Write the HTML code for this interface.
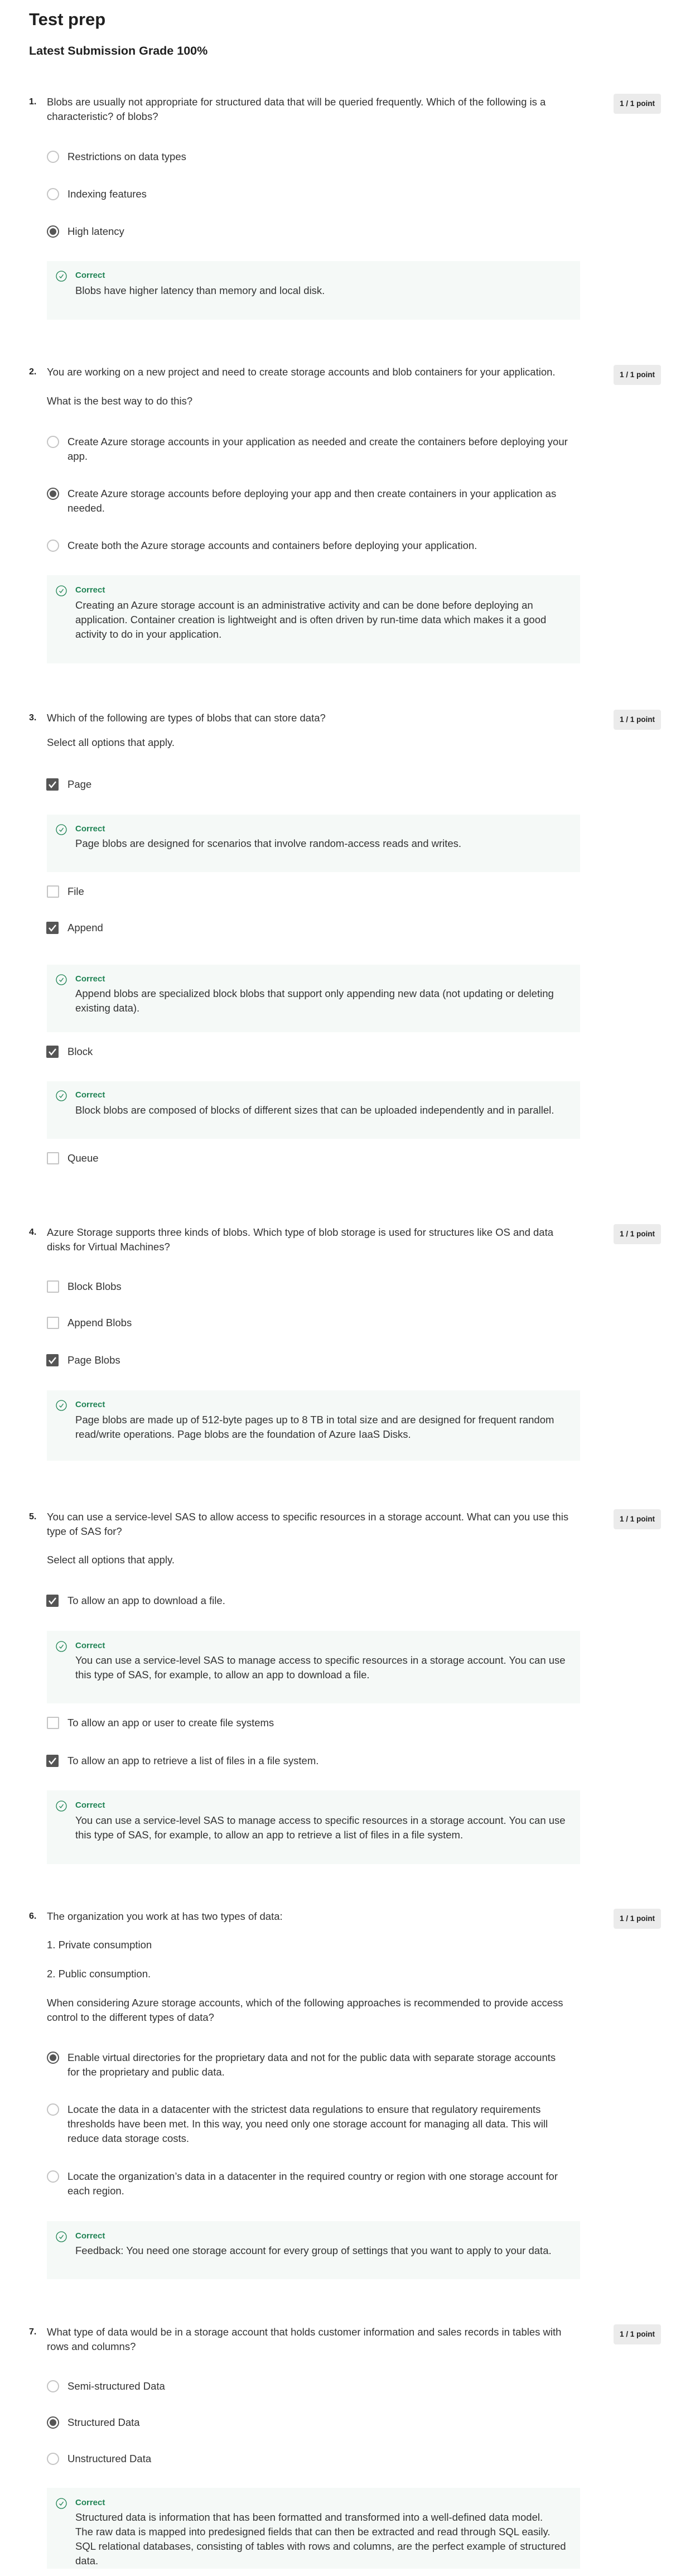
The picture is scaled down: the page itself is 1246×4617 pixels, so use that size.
<!DOCTYPE html>
<html><head><meta charset="utf-8"><style>
body{margin:0;width:1246px;height:4617px;background:#fff;position:relative;font-family:"Liberation Sans",sans-serif;color:#1f1f1f;overflow:hidden}
.a{position:absolute;white-space:nowrap}
.t{position:absolute;white-space:nowrap;font-size:18.5px;line-height:26px;color:#333}
.n{position:absolute;left:52px;font-size:16px;line-height:26px;font-weight:bold;color:#1f1f1f}
.b{position:absolute;left:1100px;width:85px;height:36px;background:#ebebeb;border-radius:4px;font-size:13.5px;font-weight:bold;line-height:36px;text-align:center;color:#1f1f1f}
.r{position:absolute;left:84px;width:18px;height:18px;border:2px solid #c4c4c4;border-radius:50%}
.r.s{border-color:#555}
.r.s:after{content:"";position:absolute;left:3px;top:3px;width:12px;height:12px;border-radius:50%;background:#555}
.c{position:absolute;left:84px;width:18px;height:18px;border:2px solid #c4c4c4;border-radius:2px}
.fb{position:absolute;left:84px;width:956px;background:#f5f9f7}
.ic{position:absolute;left:100px}
.cr{position:absolute;left:135px;font-size:15px;font-weight:bold;color:#1f8354;line-height:26px}
</style></head><body>
<div class="a" style="left:52px;top:17px;font-size:31px;font-weight:bold;color:#1f1f1f">Test prep</div>
<div class="a" style="left:52px;top:79px;font-size:21.5px;font-weight:bold;color:#1f1f1f">Latest Submission Grade 100%</div>

<!-- Q1 -->
<div class="n" style="top:170px">1.</div><div class="b" style="top:168px">1 / 1 point</div>
<div class="t" style="left:84px;top:170px">Blobs are usually not appropriate for structured data that will be queried frequently. Which of the following is a<br>characteristic? of blobs?</div>
<div class="r" style="top:270px"></div><div class="t" style="left:121px;top:268px">Restrictions on data types</div>
<div class="r" style="top:337px"></div><div class="t" style="left:121px;top:335px">Indexing features</div>
<div class="r s" style="top:404px"></div><div class="t" style="left:121px;top:402px">High latency</div>
<div class="fb" style="top:468px;height:105px"></div>
<svg class="ic" style="top:485px" width="20" height="20" viewBox="0 0 20 20"><circle cx="10" cy="10" r="9" fill="none" stroke="#1f8354" stroke-width="1.3"/><path d="M6.5 10.5l2.5 2.5 4.5-6" fill="none" stroke="#1f8354" stroke-width="1.3"/></svg>
<div class="cr" style="top:481px">Correct</div>
<div class="t" style="left:135px;top:508px">Blobs have higher latency than memory and local disk.</div>

<!-- Q2 -->
<div class="n" style="top:654px">2.</div><div class="b" style="top:654px">1 / 1 point</div>
<div class="t" style="left:84px;top:654px">You are working on a new project and need to create storage accounts and blob containers for your application.</div>
<div class="t" style="left:84px;top:706px">What is the best way to do this?</div>
<div class="r" style="top:781px"></div><div class="t" style="left:121px;top:779px">Create Azure storage accounts in your application as needed and create the containers before deploying your<br>app.</div>
<div class="r s" style="top:874px"></div><div class="t" style="left:121px;top:872px">Create Azure storage accounts before deploying your app and then create containers in your application as<br>needed.</div>
<div class="r" style="top:967px"></div><div class="t" style="left:121px;top:965px">Create both the Azure storage accounts and containers before deploying your application.</div>
<div class="fb" style="top:1031px;height:158px"></div>
<svg class="ic" style="top:1049px" width="20" height="20" viewBox="0 0 20 20"><circle cx="10" cy="10" r="9" fill="none" stroke="#1f8354" stroke-width="1.3"/><path d="M6.5 10.5l2.5 2.5 4.5-6" fill="none" stroke="#1f8354" stroke-width="1.3"/></svg>
<div class="cr" style="top:1045px">Correct</div>
<div class="t" style="left:135px;top:1072px">Creating an Azure storage account is an administrative activity and can be done before deploying an<br>application. Container creation is lightweight and is often driven by run-time data which makes it a good<br>activity to do in your application.</div>

<!-- Q3 -->
<div class="n" style="top:1274px">3.</div><div class="b" style="top:1272px">1 / 1 point</div>
<div class="t" style="left:84px;top:1274px">Which of the following are types of blobs that can store data?</div>
<div class="t" style="left:84px;top:1318px">Select all options that apply.</div>
<svg class="a" style="left:83px;top:1395px" width="22" height="22"><rect width="22" height="22" rx="2" fill="#555"/><path d="M5 11l4 5 8-10" fill="none" stroke="#fff" stroke-width="2.4"/></svg>
<div class="t" style="left:121px;top:1393px">Page</div>
<div class="fb" style="top:1460px;height:103px"></div>
<svg class="ic" style="top:1477px" width="20" height="20" viewBox="0 0 20 20"><circle cx="10" cy="10" r="9" fill="none" stroke="#1f8354" stroke-width="1.3"/><path d="M6.5 10.5l2.5 2.5 4.5-6" fill="none" stroke="#1f8354" stroke-width="1.3"/></svg>
<div class="cr" style="top:1473px">Correct</div>
<div class="t" style="left:135px;top:1499px">Page blobs are designed for scenarios that involve random-access reads and writes.</div>
<div class="c" style="top:1587px"></div><div class="t" style="left:121px;top:1585px">File</div>
<svg class="a" style="left:83px;top:1652px" width="22" height="22"><rect width="22" height="22" rx="2" fill="#555"/><path d="M5 11l4 5 8-10" fill="none" stroke="#fff" stroke-width="2.4"/></svg>
<div class="t" style="left:121px;top:1650px">Append</div>
<div class="fb" style="top:1729px;height:121px"></div>
<svg class="ic" style="top:1746px" width="20" height="20" viewBox="0 0 20 20"><circle cx="10" cy="10" r="9" fill="none" stroke="#1f8354" stroke-width="1.3"/><path d="M6.5 10.5l2.5 2.5 4.5-6" fill="none" stroke="#1f8354" stroke-width="1.3"/></svg>
<div class="cr" style="top:1742px">Correct</div>
<div class="t" style="left:135px;top:1768px">Append blobs are specialized block blobs that support only appending new data (not updating or deleting<br>existing data).</div>
<svg class="a" style="left:83px;top:1874px" width="22" height="22"><rect width="22" height="22" rx="2" fill="#555"/><path d="M5 11l4 5 8-10" fill="none" stroke="#fff" stroke-width="2.4"/></svg>
<div class="t" style="left:121px;top:1872px">Block</div>
<div class="fb" style="top:1938px;height:103px"></div>
<svg class="ic" style="top:1954px" width="20" height="20" viewBox="0 0 20 20"><circle cx="10" cy="10" r="9" fill="none" stroke="#1f8354" stroke-width="1.3"/><path d="M6.5 10.5l2.5 2.5 4.5-6" fill="none" stroke="#1f8354" stroke-width="1.3"/></svg>
<div class="cr" style="top:1950px">Correct</div>
<div class="t" style="left:135px;top:1977px">Block blobs are composed of blocks of different sizes that can be uploaded independently and in parallel.</div>
<div class="c" style="top:2065px"></div><div class="t" style="left:121px;top:2063px">Queue</div>

<!-- Q4 -->
<div class="n" style="top:2196px">4.</div><div class="b" style="top:2194px">1 / 1 point</div>
<div class="t" style="left:84px;top:2196px">Azure Storage supports three kinds of blobs. Which type of blob storage is used for structures like OS and data<br>disks for Virtual Machines?</div>
<div class="c" style="top:2295px"></div><div class="t" style="left:121px;top:2293px">Block Blobs</div>
<div class="c" style="top:2360px"></div><div class="t" style="left:121px;top:2358px">Append Blobs</div>
<svg class="a" style="left:83px;top:2427px" width="22" height="22"><rect width="22" height="22" rx="2" fill="#555"/><path d="M5 11l4 5 8-10" fill="none" stroke="#fff" stroke-width="2.4"/></svg>
<div class="t" style="left:121px;top:2425px">Page Blobs</div>
<div class="fb" style="top:2492px;height:126px"></div>
<svg class="ic" style="top:2509px" width="20" height="20" viewBox="0 0 20 20"><circle cx="10" cy="10" r="9" fill="none" stroke="#1f8354" stroke-width="1.3"/><path d="M6.5 10.5l2.5 2.5 4.5-6" fill="none" stroke="#1f8354" stroke-width="1.3"/></svg>
<div class="cr" style="top:2505px">Correct</div>
<div class="t" style="left:135px;top:2532px">Page blobs are made up of 512-byte pages up to 8 TB in total size and are designed for frequent random<br>read/write operations. Page blobs are the foundation of Azure IaaS Disks.</div>

<!-- Q5 -->
<div class="n" style="top:2706px">5.</div><div class="b" style="top:2705px">1 / 1 point</div>
<div class="t" style="left:84px;top:2706px">You can use a service-level SAS to allow access to specific resources in a storage account. What can you use this<br>type of SAS for?</div>
<div class="t" style="left:84px;top:2783px">Select all options that apply.</div>
<svg class="a" style="left:83px;top:2858px" width="22" height="22"><rect width="22" height="22" rx="2" fill="#555"/><path d="M5 11l4 5 8-10" fill="none" stroke="#fff" stroke-width="2.4"/></svg>
<div class="t" style="left:121px;top:2856px">To allow an app to download a file.</div>
<div class="fb" style="top:2923px;height:130px"></div>
<svg class="ic" style="top:2941px" width="20" height="20" viewBox="0 0 20 20"><circle cx="10" cy="10" r="9" fill="none" stroke="#1f8354" stroke-width="1.3"/><path d="M6.5 10.5l2.5 2.5 4.5-6" fill="none" stroke="#1f8354" stroke-width="1.3"/></svg>
<div class="cr" style="top:2937px">Correct</div>
<div class="t" style="left:135px;top:2963px">You can use a service-level SAS to manage access to specific resources in a storage account. You can use<br>this type of SAS, for example, to allow an app to download a file.</div>
<div class="c" style="top:3077px"></div><div class="t" style="left:121px;top:3075px">To allow an app or user to create file systems</div>
<svg class="a" style="left:83px;top:3145px" width="22" height="22"><rect width="22" height="22" rx="2" fill="#555"/><path d="M5 11l4 5 8-10" fill="none" stroke="#fff" stroke-width="2.4"/></svg>
<div class="t" style="left:121px;top:3143px">To allow an app to retrieve a list of files in a file system.</div>
<div class="fb" style="top:3209px;height:132px"></div>
<svg class="ic" style="top:3227px" width="20" height="20" viewBox="0 0 20 20"><circle cx="10" cy="10" r="9" fill="none" stroke="#1f8354" stroke-width="1.3"/><path d="M6.5 10.5l2.5 2.5 4.5-6" fill="none" stroke="#1f8354" stroke-width="1.3"/></svg>
<div class="cr" style="top:3223px">Correct</div>
<div class="t" style="left:135px;top:3250px">You can use a service-level SAS to manage access to specific resources in a storage account. You can use<br>this type of SAS, for example, to allow an app to retrieve a list of files in a file system.</div>

<!-- Q6 -->
<div class="n" style="top:3422px">6.</div><div class="b" style="top:3421px">1 / 1 point</div>
<div class="t" style="left:84px;top:3422px">The organization you work at has two types of data:</div>
<div class="t" style="left:84px;top:3473px">1. Private consumption</div>
<div class="t" style="left:84px;top:3525px">2. Public consumption.</div>
<div class="t" style="left:84px;top:3577px">When considering Azure storage accounts, which of the following approaches is recommended to provide access<br>control to the different types of data?</div>
<div class="r s" style="top:3677px"></div><div class="t" style="left:121px;top:3675px">Enable virtual directories for the proprietary data and not for the public data with separate storage accounts<br>for the proprietary and public data.</div>
<div class="r" style="top:3770px"></div><div class="t" style="left:121px;top:3768px">Locate the data in a datacenter with the strictest data regulations to ensure that regulatory requirements<br>thresholds have been met. In this way, you need only one storage account for managing all data. This will<br>reduce data storage costs.</div>
<div class="r" style="top:3890px"></div><div class="t" style="left:121px;top:3888px">Locate the organization’s data in a datacenter in the required country or region with one storage account for<br>each region.</div>
<div class="fb" style="top:3981px;height:104px"></div>
<svg class="ic" style="top:3999px" width="20" height="20" viewBox="0 0 20 20"><circle cx="10" cy="10" r="9" fill="none" stroke="#1f8354" stroke-width="1.3"/><path d="M6.5 10.5l2.5 2.5 4.5-6" fill="none" stroke="#1f8354" stroke-width="1.3"/></svg>
<div class="cr" style="top:3995px">Correct</div>
<div class="t" style="left:135px;top:4021px">Feedback: You need one storage account for every group of settings that you want to apply to your data.</div>

<!-- Q7 -->
<div class="n" style="top:4167px">7.</div><div class="b" style="top:4166px">1 / 1 point</div>
<div class="t" style="left:84px;top:4167px">What type of data would be in a storage account that holds customer information and sales records in tables with<br>rows and columns?</div>
<div class="r" style="top:4266px"></div><div class="t" style="left:121px;top:4264px">Semi-structured Data</div>
<div class="r s" style="top:4331px"></div><div class="t" style="left:121px;top:4329px">Structured Data</div>
<div class="r" style="top:4396px"></div><div class="t" style="left:121px;top:4394px">Unstructured Data</div>
<div class="fb" style="top:4459px;height:145px"></div>
<svg class="ic" style="top:4477px" width="20" height="20" viewBox="0 0 20 20"><circle cx="10" cy="10" r="9" fill="none" stroke="#1f8354" stroke-width="1.3"/><path d="M6.5 10.5l2.5 2.5 4.5-6" fill="none" stroke="#1f8354" stroke-width="1.3"/></svg>
<div class="cr" style="top:4473px">Correct</div>
<div class="t" style="left:135px;top:4499px">Structured data is information that has been formatted and transformed into a well-defined data model.<br>The raw data is mapped into predesigned fields that can then be extracted and read through SQL easily.<br>SQL relational databases, consisting of tables with rows and columns, are the perfect example of structured<br>data.</div>
</body></html>
